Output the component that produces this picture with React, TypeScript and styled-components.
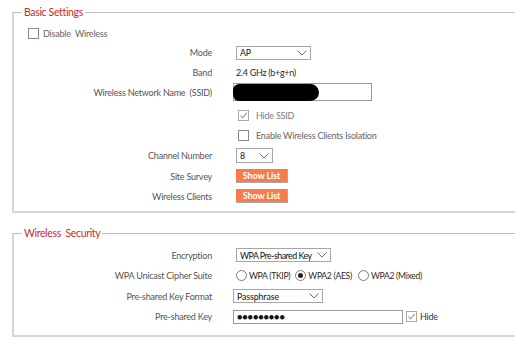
import React from 'react';
import styled, { createGlobalStyle } from 'styled-components';

const Global = createGlobalStyle`
  html, body { margin: 0; padding: 0; background: #fff; }
  body { font-family: Lato, "Open Sans", "Liberation Sans", sans-serif; overflow: hidden; }
`;

const Page = styled.div`
  width: 515px;
  height: 345px;
  overflow: hidden;
  box-sizing: border-box;
  padding: 5px 0 0 12px;
  display: flex;
  flex-direction: column;
  gap: 13px;
`;

const Fieldset = styled.fieldset<{ $pb: number }>`
  margin: 0 -20px 0 0;
  padding: 0 0 ${p => p.$pb}px 0;
  border: 2px solid #d6d6d6;
  border-top: 1px solid #bdbdbd;
  min-width: 0;
`;

const Legend = styled.legend`
  margin-left: 8px;
  padding: 0 2px;
  font-size: 10.5px;
  line-height: 14px;
  color: #cc2a2a;
  letter-spacing: -0.35px;
  white-space: pre;
`;

const Body = styled.div<{ $pt: number }>`
  padding-top: ${p => p.$pt}px;
  display: flex;
  flex-direction: column;
`;

const Row = styled.div<{ $h: number; $mb?: number }>`
  display: grid;
  grid-template-columns: 198px 1fr;
  column-gap: 21px;
  align-items: center;
  height: ${p => p.$h}px;
  margin-bottom: ${p => p.$mb ?? 0}px;
  font-size: 9px;
  letter-spacing: -0.22px;
`;

const Label = styled.div`
  text-align: right;
  color: #555;
  white-space: pre;
`;

const Control = styled.div<{ $ml?: number }>`
  display: flex;
  align-items: center;
  margin-left: ${p => p.$ml ?? 0}px;
  white-space: pre;
`;

const TopCheckRow = styled.div`
  display: flex;
  align-items: center;
  height: 20px;
  padding-left: 14px;
  font-size: 9px;
  letter-spacing: -0.2px;
  color: #666;
  white-space: pre;
`;

const Box = styled.span<{ $dim?: boolean }>`
  width: 9px;
  height: 9px;
  border: 1px solid ${p => (p.$dim ? '#a8a8a8' : '#8a8a8a')};
  background: #fff;
  display: inline-flex;
  align-items: center;
  justify-content: center;
  flex: none;
`;

const CheckText = styled.span<{ $gap?: number; $color?: string }>`
  margin-left: ${p => p.$gap ?? 7}px;
  color: ${p => p.$color ?? '#666'};
`;

const SelectBox = styled.div<{ $w: number; $h?: number; $ls?: number }>`
  width: ${p => p.$w}px;
  height: ${p => p.$h ?? 14}px;
  box-sizing: border-box;
  border: 1px solid #a6a6a6;
  display: flex;
  align-items: center;
  justify-content: space-between;
  padding: 0 3px 0 3px;
  color: #111;
  font-size: 8.8px;
  letter-spacing: ${p => p.$ls ?? -0.1}px;
  background: #fff;
`;

const ValueText = styled.span`
  color: #2a2a2a;
  letter-spacing: -0.3px;
`;

const TextBox = styled.div<{ $w: number; $h: number }>`
  width: ${p => p.$w}px;
  height: ${p => p.$h}px;
  box-sizing: border-box;
  border: 1px solid #9a9a9a;
  display: flex;
  align-items: center;
  background: #fff;
`;

const Redaction = styled.div`
  width: 86px;
  height: 17px;
  margin-left: -1px;
  background: #000;
  border-radius: 9px 12px 12px 9px;
`;

const Dots = styled.span`
  margin-left: 3px;
  font-size: 9px;
  letter-spacing: -0.1px;
  color: #111;
  line-height: 1;
`;

const OrangeButton = styled.div`
  width: 52px;
  height: 14px;
  box-sizing: border-box;
  background: #f97a4b;
  border-right: 1px solid #a9a9a9;
  border-bottom: 1px solid #a9a9a9;
  color: #fff;
  font-weight: 700;
  font-size: 9px;
  letter-spacing: -0.1px;
  display: flex;
  align-items: center;
  justify-content: center;
`;

const Radio = styled.span`
  width: 9px;
  height: 9px;
  border-radius: 50%;
  border: 1px solid #7d7d7d;
  display: inline-flex;
  align-items: center;
  justify-content: center;
  flex: none;
  background: #fff;
`;

const RadioDot = styled.span`
  width: 5px;
  height: 5px;
  border-radius: 50%;
  background: #222;
`;

const RadioText = styled.span<{ $mr: number }>`
  margin-left: 2px;
  margin-right: ${p => p.$mr}px;
  color: #2a2a2a;
  font-size: 8.6px;
  letter-spacing: -0.3px;
`;

const Chevron = () => (
  <svg width="10" height="6" viewBox="0 0 10 6">
    <polyline points="0.5,0.5 5,5 9.5,0.5" fill="none" stroke="#6a6a6a" strokeWidth="1" />
  </svg>
);

const Tick = ({ color = '#9a9a9a' }: { color?: string }) => (
  <svg width="9" height="9" viewBox="0 0 9 9">
    <polyline points="1.5,4.5 3.5,6.8 7.8,1.8" fill="none" stroke={color} strokeWidth="1.1" />
  </svg>
);

const Select = ({ w, value, h, ls }: { w: number; value: string; h?: number; ls?: number }) => (
  <SelectBox $w={w} $h={h} $ls={ls}>
    <span>{value}</span>
    <Chevron />
  </SelectBox>
);

export default function App() {
  return (
    <>
      <Global />
      <Page>
        <Fieldset $pb={5}>
          <Legend>Basic Settings</Legend>
          <Body $pt={4}>
            <TopCheckRow>
              <Box />
              <CheckText $gap={4}>Disable  Wireless</CheckText>
            </TopCheckRow>
            <Row $h={19}>
              <Label>Mode</Label>
              <Control $ml={3}><Select w={75} value="AP" /></Control>
            </Row>
            <Row $h={20}>
              <Label>Band</Label>
              <Control $ml={3}><ValueText>2.4 GHz (b+g+n)</ValueText></Control>
            </Row>
            <Row $h={20} $mb={3}>
              <Label>Wireless Network Name  (SSID)</Label>
              <Control>
                <TextBox $w={139} $h={18}><Redaction /></TextBox>
              </Control>
            </Row>
            <Row $h={20}>
              <span />
              <Control $ml={5}>
                <Box $dim><Tick /></Box>
                <CheckText $color="#7a7a7a">Hide SSID</CheckText>
              </Control>
            </Row>
            <Row $h={20}>
              <span />
              <Control $ml={5}>
                <Box />
                <CheckText>Enable Wireless Clients Isolation</CheckText>
              </Control>
            </Row>
            <Row $h={21}>
              <Label>Channel Number</Label>
              <Control $ml={3}><Select w={37} h={15} value="8" /></Control>
            </Row>
            <Row $h={20}>
              <Label>Site Survey</Label>
              <Control $ml={3}><OrangeButton>Show List</OrangeButton></Control>
            </Row>
            <Row $h={20}>
              <Label>Wireless Clients</Label>
              <Control $ml={3}><OrangeButton>Show List</OrangeButton></Control>
            </Row>
          </Body>
        </Fieldset>

        <Fieldset $pb={8}>
          <Legend>Wireless  Security</Legend>
          <Body $pt={5}>
            <Row $h={20}>
              <Label>Encryption</Label>
              <Control $ml={3}><Select w={95} value="WPA Pre-shared Key" ls={-0.5} /></Control>
            </Row>
            <Row $h={21}>
              <Label>WPA Unicast Cipher Suite</Label>
              <Control $ml={3}>
                <Radio />
                <RadioText $mr={5}>WPA (TKIP)</RadioText>
                <Radio><RadioDot /></Radio>
                <RadioText $mr={6}>WPA2 (AES)</RadioText>
                <Radio />
                <RadioText $mr={0}>WPA2 (Mixed)</RadioText>
              </Control>
            </Row>
            <Row $h={20}>
              <Label>Pre-shared Key Format</Label>
              <Control><Select w={90} value="Passphrase" /></Control>
            </Row>
            <Row $h={21}>
              <Label>Pre-shared Key</Label>
              <Control>
                <TextBox $w={170} $h={14}><Dots>●●●●●●●●●</Dots></TextBox>
                <Box $dim style={{ marginLeft: 3 }}><Tick /></Box>
                <CheckText $gap={3} $color="#333">Hide</CheckText>
              </Control>
            </Row>
          </Body>
        </Fieldset>
      </Page>
    </>
  );
}
